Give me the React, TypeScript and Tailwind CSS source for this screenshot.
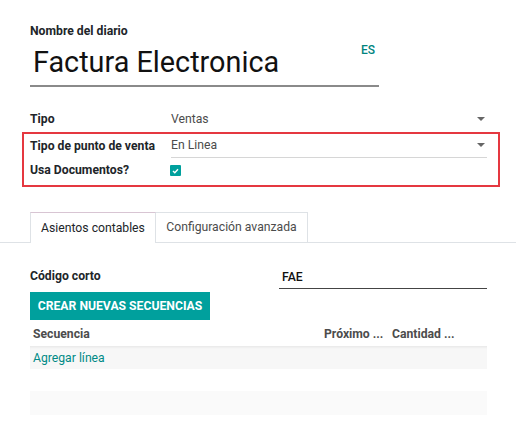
import React from "react";

const Caret = () => (
  <span className="h-0 w-0 border-x-[4px] border-t-[4px] border-x-transparent border-t-[#666]"></span>
);

const FieldRow = ({
  label,
  children,
  className = "",
}: {
  label: string;
  children: React.ReactNode;
  className?: string;
}) => (
  <div className={`flex items-center ${className}`}>
    <div className="w-[141px] shrink-0 text-[12.2px] font-bold text-[#212529]">{label}</div>
    <div className="flex-1">{children}</div>
  </div>
);

export default function App() {
  return (
    <div
      className="h-[432px] w-[516px] overflow-hidden bg-white text-[#4c4c4c]"
      style={{ fontFamily: "Roboto, 'Noto Sans', sans-serif" }}
    >
      <div className="pl-[30px] pr-[29px] pt-[22px]">
        <div className="text-[12.2px] font-bold leading-[18px] text-[#212529]">Nombre del diario</div>
        <div className="flex w-[349px] items-start justify-between border-b-2 border-[#8a8a8a] pb-[2px]">
          <div className="pl-[3px] pt-[1px] text-[28.8px] leading-[42px] text-[#111]">Factura Electronica</div>
          <div className="mr-[4px] mt-[1px] text-[12px] font-medium text-[#01847f]">ES</div>
        </div>

        <div className="mt-[20px]">
          <FieldRow label="Tipo" className="h-[24px]">
            <div className="flex items-center justify-between pr-[2px] pt-[1px] text-[12.2px] text-[#4c4c4c]">
              <span>Ventas</span>
              <Caret />
            </div>
          </FieldRow>
        </div>
      </div>

      <div className="ml-[22px] mt-[1px] w-[478px] border-2 border-[#e53840] pb-[3px] pl-[6px] pr-[11px]">
        <FieldRow label="Tipo de punto de venta" className="h-[25px]">
          <div className="flex items-center justify-between border-b border-[#d6d6d6] pb-[3px] pr-[2px] pt-[1px] text-[12.2px] text-[#4c4c4c]">
            <span>En Linea</span>
            <Caret />
          </div>
        </FieldRow>
        <FieldRow label="Usa Documentos?" className="h-[23px]">
          <div className="ml-[-1px] flex h-[11px] w-[11px] items-center justify-center rounded-[1px] bg-[#00a09d]">
            <svg width="7" height="6" viewBox="0 0 7 6">
              <path d="M1 3 L2.8 4.7 L6 1.2" stroke="white" strokeWidth="1.4" fill="none" />
            </svg>
          </div>
        </FieldRow>
      </div>

      <div className="mt-[25px] flex border-b border-[#dee2e6] pl-[30px]">
        <div className="mb-[-1px] flex h-[31px] w-[126px] items-center justify-center border-x border-t border-[#dee2e6] border-t-[#d8c5d3] bg-white text-[12.2px] text-[#212529]">
          Asientos contables
        </div>
        <div className="flex h-[30px] w-[152px] items-center justify-center self-end border-r border-t border-[#dee2e6] text-[12.2px] text-[#4c4c4c]">
          Configuración avanzada
        </div>
      </div>

      <div className="pl-[30px] pr-[29px]">
        <div className="mt-[24px] flex items-end">
          <div className="w-[249px] pb-[4px] text-[12.2px] font-bold text-[#212529]">Código corto</div>
          <div className="flex-1 border-b border-[#444] pb-[2px] pl-[3px] text-[12.2px] font-medium text-[#111]">FAE</div>
        </div>

        <button className="mt-[3px] flex h-[28px] w-[180px] items-center justify-center bg-[#00a09d] text-[12.2px] font-bold uppercase text-white">
          Crear nuevas secuencias
        </button>

        <div className="mt-[1px] flex h-[25px] items-center text-[12.2px] font-bold text-[#4c4c4c]">
          <div className="flex-1 pl-[3px]">Secuencia</div>
          <div className="w-[68px]">Próximo ...</div>
          <div className="w-[95px]">Cantidad ...</div>
        </div>
        <div className="flex h-[23px] items-center bg-[#f7f7f7] pl-[3px] text-[12.2px] text-[#018a86] shadow-[inset_0_3px_3px_-2px_rgba(0,0,0,0.08)]">
          Agregar línea
        </div>
        <div className="h-[22px]"></div>
        <div className="h-[24px] bg-[#fafafa]"></div>
      </div>
    </div>
  );
}
